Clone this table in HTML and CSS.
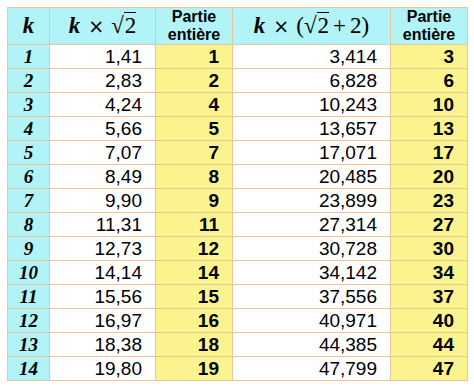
FILE: index.html
```html
<!DOCTYPE html>
<html lang="fr">
<head>
<meta charset="utf-8">
<link rel="stylesheet" href="styles.css">
</head>
<body>
<table class="tbl">
  <colgroup>
    <col class="c1"><col class="c2"><col class="c3"><col class="c4"><col class="c5">
  </colgroup>
  <thead>
    <tr>
      <th class="math"><span class="kv">k</span></th>
      <th class="math"><span class="kv">k</span><span class="times">×</span><span class="rad">√<span class="ov">2</span></span></th>
      <th class="pe">Partie<br>entière</th>
      <th class="math"><span class="kv">k</span><span class="times">×</span><span class="par">(</span><span class="rad">√<span class="ov">2</span></span><span class="plus">+</span>2<span class="par">)</span></th>
      <th class="pe">Partie<br>entière</th>
    </tr>
  </thead>
  <tbody>
    <tr><td class="k">1</td><td class="n">1,41</td><td class="y">1</td><td class="n">3,414</td><td class="y">3</td></tr>
    <tr><td class="k">2</td><td class="n">2,83</td><td class="y">2</td><td class="n">6,828</td><td class="y">6</td></tr>
    <tr><td class="k">3</td><td class="n">4,24</td><td class="y">4</td><td class="n">10,243</td><td class="y">10</td></tr>
    <tr><td class="k">4</td><td class="n">5,66</td><td class="y">5</td><td class="n">13,657</td><td class="y">13</td></tr>
    <tr><td class="k">5</td><td class="n">7,07</td><td class="y">7</td><td class="n">17,071</td><td class="y">17</td></tr>
    <tr><td class="k">6</td><td class="n">8,49</td><td class="y">8</td><td class="n">20,485</td><td class="y">20</td></tr>
    <tr><td class="k">7</td><td class="n">9,90</td><td class="y">9</td><td class="n">23,899</td><td class="y">23</td></tr>
    <tr><td class="k">8</td><td class="n">11,31</td><td class="y">11</td><td class="n">27,314</td><td class="y">27</td></tr>
    <tr><td class="k">9</td><td class="n">12,73</td><td class="y">12</td><td class="n">30,728</td><td class="y">30</td></tr>
    <tr><td class="k">10</td><td class="n">14,14</td><td class="y">14</td><td class="n">34,142</td><td class="y">34</td></tr>
    <tr><td class="k">11</td><td class="n">15,56</td><td class="y">15</td><td class="n">37,556</td><td class="y">37</td></tr>
    <tr><td class="k">12</td><td class="n">16,97</td><td class="y">16</td><td class="n">40,971</td><td class="y">40</td></tr>
    <tr><td class="k">13</td><td class="n">18,38</td><td class="y">18</td><td class="n">44,385</td><td class="y">44</td></tr>
    <tr><td class="k">14</td><td class="n">19,80</td><td class="y">19</td><td class="n">47,799</td><td class="y">47</td></tr>
  </tbody>
</table>
</body>
</html>
```
FILE: styles.css
```css
html, body {
  margin: 0;
  padding: 0;
  background: #ffffff;
}
body {
  padding: 7px 0 0 7px;
  font-family: "Liberation Sans", Arial, sans-serif;
  color: #000;
}
.tbl {
  border-collapse: collapse;
  table-layout: fixed;
  width: 460px;
}
.c1 { width: 42px; }
.c2 { width: 106px; }
.c3 { width: 77px; }
.c4 { width: 158px; }
.c5 { width: 77px; }
.tbl th, .tbl td {
  border: 1px solid #ecc49c;
  padding: 0;
}
.tbl th {
  background: #b1f3f7;
  height: 36px;
  text-align: center;
  vertical-align: middle;
  font-weight: normal;
}
.tbl td {
  height: 23px;
  line-height: 20px;
  font-size: 19px;
}
.kv {
  font-family: "Liberation Serif", "Times New Roman", serif;
  font-weight: bold;
  font-style: italic;
  font-size: 23px;
}
.math {
  font-family: "Liberation Serif", "Times New Roman", serif;
  font-size: 23px;
  line-height: 26px;
  white-space: nowrap;
}
.times {
  margin: 0 7px 0 8px;
  font-family: "DejaVu Sans", sans-serif;
  font-size: 19px;
}
.rad {
  white-space: nowrap;
}
.ov {
  border-top: 1px solid #000;
  padding-left: 1px;
}
.plus {
  margin: 0 4px;
}
.par {
  font-size: 23px;
}
.pe {
  font-family: "Liberation Sans", Arial, sans-serif;
  font-weight: bold !important;
  font-size: 16px;
  line-height: 18px;
}
.k {
  background: #b1f3f7;
  text-align: center;
  font-family: "Liberation Serif", "Times New Roman", serif;
  font-weight: bold;
  font-style: italic;
}
.n {
  background: #ffffff;
  text-align: right;
  padding-right: 13px !important;
}
.y {
  background: #fbf48e;
  text-align: right;
  font-weight: bold;
  padding-right: 13px !important;
}
```
